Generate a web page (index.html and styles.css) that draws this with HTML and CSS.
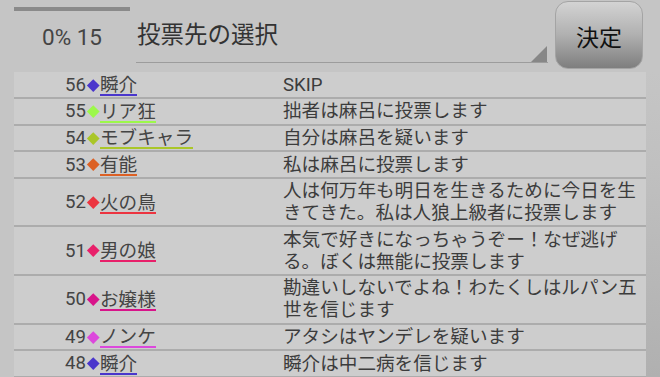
FILE: index.html
```html
<!DOCTYPE html>
<html lang="ja">
  <head>
    <meta charset="UTF-8" />
    <meta name="viewport" content="width=device-width, initial-scale=1.0" />
    <title>投票先の選択</title>
    <link rel="stylesheet" href="styles.css">
  </head>
  <body>
    <div class="header">
      <div class="timer">
        <div class="timer-bar"></div>
        <div class="timer-text">0% 15</div>
      </div>
      <div class="select">
        <span class="select-label">投票先の選択</span>
        <span class="select-arrow"></span>
      </div>
      <button class="ok">決定</button>
    </div>

    <div class="body-row">
      <div class="log">
        <div class="row">
          <span class="num">56</span>
          <span class="mark"><i style="background:#4a36cc"></i></span>
          <span class="name"><u style="border-color:#4a36cc">瞬介</u></span>
          <span class="msg">SKIP</span>
        </div>
        <div class="row">
          <span class="num">55</span>
          <span class="mark"><i style="background:#9cf84a"></i></span>
          <span class="name"><u style="border-color:#9cf84a">リア狂</u></span>
          <span class="msg">拙者は麻呂に投票します</span>
        </div>
        <div class="row">
          <span class="num">54</span>
          <span class="mark"><i style="background:#aac628"></i></span>
          <span class="name"><u style="border-color:#aac628">モブキャラ</u></span>
          <span class="msg">自分は麻呂を疑います</span>
        </div>
        <div class="row">
          <span class="num">53</span>
          <span class="mark"><i style="background:#dc6024"></i></span>
          <span class="name"><u style="border-color:#dc6024">有能</u></span>
          <span class="msg">私は麻呂に投票します</span>
        </div>
        <div class="row">
          <span class="num">52</span>
          <span class="mark"><i style="background:#ec3440"></i></span>
          <span class="name"><u style="border-color:#ec3440">火の鳥</u></span>
          <span class="msg">人は何万年も明日を生きるために今日を生きてきた。私は人狼上級者に投票します</span>
        </div>
        <div class="row">
          <span class="num">51</span>
          <span class="mark"><i style="background:#e8206a"></i></span>
          <span class="name"><u style="border-color:#e8206a">男の娘</u></span>
          <span class="msg">本気で好きになっちゃうぞー！なぜ逃げる。ぼくは無能に投票します</span>
        </div>
        <div class="row">
          <span class="num">50</span>
          <span class="mark"><i style="background:#d8148a"></i></span>
          <span class="name"><u style="border-color:#d8148a">お嬢様</u></span>
          <span class="msg">勘違いしないでよね！わたくしはルパン五世を信じます</span>
        </div>
        <div class="row">
          <span class="num">49</span>
          <span class="mark"><i style="background:#dc48dc"></i></span>
          <span class="name"><u style="border-color:#dc48dc">ノンケ</u></span>
          <span class="msg">アタシはヤンデレを疑います</span>
        </div>
        <div class="row">
          <span class="num">48</span>
          <span class="mark"><i style="background:#4a36cc"></i></span>
          <span class="name"><u style="border-color:#4a36cc">瞬介</u></span>
          <span class="msg">瞬介は中二病を信じます</span>
        </div>
      </div>
      <div class="strip"></div>
    </div>
  </body>
</html>
```

FILE: styles.css
```css
* {
  padding: 0;
  margin: 0;
  box-sizing: border-box;
}

html,
body {
  height: 100%;
  overflow: hidden;
}

body {
  background: #c5c5c5;
  font-family: Roboto, "Noto Sans CJK JP", sans-serif;
  color: #444;
}

.header {
  display: flex;
  height: 72px;
  padding: 0 17px 0 14px;
}

.timer {
  width: 116px;
  margin-right: 6px;
}

.timer-bar {
  height: 4px;
  margin-top: 7px;
  background: #8a8a8a;
}

.timer-text {
  font-size: 22.5px;
  line-height: 30px;
  margin-top: 11px;
  text-align: center;
  color: #444;
}

.select {
  position: relative;
  flex: 1;
  display: flex;
  align-items: center;
  height: 62.5px;
  padding: 4px 0 0 1px;
  border-bottom: 1.5px solid #9c9c9c;
}

.select-label {
  font-family: "Noto Sans CJK JP", sans-serif;
  font-size: 23.5px;
  color: #333;
}

.select-arrow {
  position: absolute;
  right: 1px;
  bottom: 0;
  width: 0;
  height: 0;
  border-left: 16px solid transparent;
  border-bottom: 16px solid #878787;
}

.ok {
  width: 88px;
  height: 68px;
  margin: 1px 0 0 7px;
  border: 1px solid #a4a4a4;
  border-radius: 13px;
  background: linear-gradient(#d3d3d3, #b0b0b0 50%, #7e7e7e);
  font-family: "Noto Sans CJK JP", sans-serif;
  font-size: 23px;
  color: #111;
  padding-top: 2px;
}

.body-row {
  display: flex;
  padding-left: 14px;
  height: calc(100% - 72px);
}

.log {
  flex: 1;
  background: #cdcdcd;
  padding-top: 0.5px;
}

.strip {
  width: 14px;
  background: linear-gradient(#c5c5c5, #c0c0c0 30%, #b0b0b0);
}

.row {
  display: grid;
  grid-template-columns: 72px 14px 183px 1fr;
  align-items: center;
  border-bottom: 2px solid #acacac;
  font-size: 18.6px;
}

.num {
  text-align: right;
  color: #444;
}

.mark {
  display: flex;
  justify-content: center;
}

.mark i {
  display: block;
  width: 8.5px;
  height: 8.5px;
  transform: rotate(45deg);
}

.name u {
  display: inline-block;
  text-decoration: none;
  font-family: "Noto Sans CJK JP", sans-serif;
  line-height: 20px;
  padding-bottom: 1px;
  border-bottom: 2px solid;
  color: #444;
}

.msg {
  line-height: 22px;
  padding: 1.4px 0 1.2px;
  color: #3c3c3c;
}
```
